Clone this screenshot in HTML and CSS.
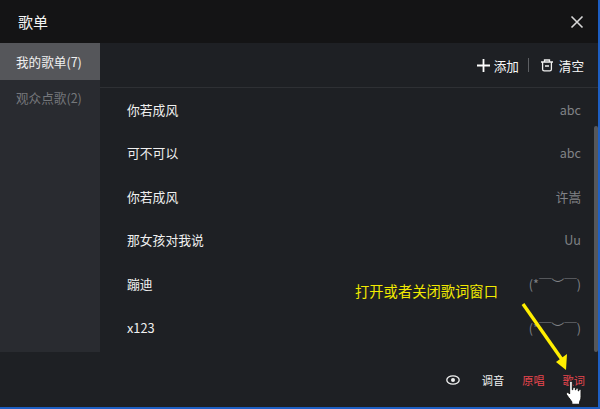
FILE: index.html
```html
<!DOCTYPE html>
<html lang="zh">
<head>
<meta charset="utf-8">
<title>歌单</title>
<link rel="stylesheet" href="styles.css">
</head>
<body>
<div class="window">
  <header class="titlebar">
    <span class="title">歌单</span>
    <svg class="close" width="14" height="14" viewBox="0 0 14 14"><path d="M1.5 1.5l11 11M12.5 1.5l-11 11" stroke="#d8d8d8" stroke-width="1.6" fill="none"/></svg>
  </header>
  <div class="body">
    <nav class="sidebar">
      <div class="tab active">我的歌单(7)</div>
      <div class="tab">观众点歌(2)</div>
    </nav>
    <main class="main">
      <div class="toolbar">
        <svg class="plus" width="13" height="13" viewBox="0 0 13 13"><path d="M6.5 0v13M0 6.5h13" stroke="#fff" stroke-width="1.8" fill="none"/></svg>
        <span class="tool-label">添加</span>
        <span class="divider"></span>
        <svg class="trash" width="12" height="13" viewBox="0 0 12 13"><path d="M0 3h12M3.5 2.6V1h5v1.6M1.6 3v7.2q0 1.6 1.6 1.6h5.6q1.6 0 1.6-1.6V3M4 7h4" stroke="#f0f0f0" stroke-width="1.3" fill="none"/></svg>
        <span class="tool-label">清空</span>
      </div>
      <ul class="songs">
        <li class="song"><span class="name">你若成风</span><span class="artist">abc</span></li>
        <li class="song"><span class="name">可不可以</span><span class="artist">abc</span></li>
        <li class="song"><span class="name">你若成风</span><span class="artist">许嵩</span></li>
        <li class="song"><span class="name">那女孩对我说</span><span class="artist">Uu</span></li>
        <li class="song"><span class="name">蹦迪</span><span class="artist">(*￣︶￣)</span></li>
        <li class="song"><span class="name">x123</span><span class="artist">(*￣︶￣)</span></li>
      </ul>
      <div class="scrollbar"></div>
    </main>
  </div>
  <footer class="footer">
    <svg class="eye" width="14" height="10" viewBox="0 0 14 10"><ellipse cx="7" cy="5" rx="6.2" ry="4.2" stroke="#f0f0f0" stroke-width="1.3" fill="none"/><circle cx="7" cy="5" r="2" fill="#f0f0f0"/></svg>
    <span class="foot-btn tune">调音</span>
    <span class="foot-btn red">原唱</span>
    <span class="foot-btn red">歌词</span>
  </footer>
  <div class="note">打开或者关闭歌词窗口</div>
  <svg class="arrow" width="60" height="80" viewBox="0 0 60 80"><path d="M3 3L43 60" stroke="#ffee00" stroke-width="3.4" fill="none"/><path d="M36 61L47 53L46 69Z" fill="#ffee00"/></svg>
  <svg class="cursor" width="20" height="26" viewBox="0 0 18 24"><path d="M5 2.2c0-1.5 2.4-1.5 2.4 0V9l.6-.2V7.6c0-1.2 2.2-1.2 2.2 0V9l.6 0V8.3c0-1.2 2.1-1.2 2.1 0V10l.6 0V9.4c0-1.1 2-1.1 2 0v6.2c0 2-.9 3.2-1.3 4.4v2.4H7v-2.2c-1-1.6-2.5-3.4-4.6-6.3-1.2-1.6.5-3.1 2-1.7l.6.7z" fill="#fff" stroke="#111" stroke-width="0.9"/></svg>
</div>
</body>
</html>
```
FILE: styles.css
```css
* { box-sizing: border-box; }
html, body { margin: 0; padding: 0; }
body { width: 600px; height: 409px; background: #1e5fc4; overflow: hidden; font-family: "Noto Sans CJK SC", "Noto Sans", sans-serif; }
.window { position: relative; width: 598px; height: 407px; background: #1e2024; display: flex; flex-direction: column; overflow: hidden; }
.titlebar { height: 43px; flex: none; background: #141415; display: flex; align-items: center; justify-content: space-between; padding: 0 14px 0 18px; }
.title { color: #f4f4f4; font-size: 15px; }
.body { height: 309px; flex: none; display: flex; }
.sidebar { width: 100px; flex: none; background: #292b30; }
.tab { height: 36px; line-height: 36px; padding-left: 16px; font-size: 12.6px; color: #75777b; white-space: nowrap; }
.tab.active { height: 37px; line-height: 37px; background: #55565a; color: #f0f0f0; }
.main { position: relative; flex: 1; display: flex; flex-direction: column; min-width: 0; }
.toolbar { height: 45px; flex: none; display: flex; align-items: center; justify-content: flex-end; padding: 0 14px 0 0; border-bottom: 1px solid #2e3034; color: #f8f8f8; font-size: 12.6px; }
.plus { margin-right: 4px; }
.divider { width: 1px; height: 14px; background: #5d5f63; margin: 0 12px 0 9px; }
.trash { margin-right: 6px; }
.songs { list-style: none; margin: -0.6px 0 0; padding: 0 0 0 27px; }
.song { height: 43.6px; display: flex; align-items: center; justify-content: space-between; padding-right: 17px; }
.name { color: #f0f0f0; font-size: 12.8px; }
.artist { color: #808286; font-size: 12.6px; white-space: nowrap; }
.scrollbar { position: absolute; right: 0; top: 83px; width: 4px; height: 226px; border-radius: 2px; background: #55575b; }
.footer { flex: 1; display: flex; align-items: center; justify-content: flex-end; padding: 0 13px 0 0; font-size: 11.2px; }
.eye { margin-right: 22px; }
.foot-btn { margin-left: 18px; }
.eye + .foot-btn { margin-left: 0; }
.tune { color: #f0f0f0; }
.red { color: #e8464e; }
.note { position: absolute; left: 355px; top: 280px; color: #f2ea00; font-size: 14.3px; white-space: nowrap; }
.arrow { position: absolute; left: 520px; top: 301px; }
.cursor { position: absolute; left: 564px; top: 380px; }
```
